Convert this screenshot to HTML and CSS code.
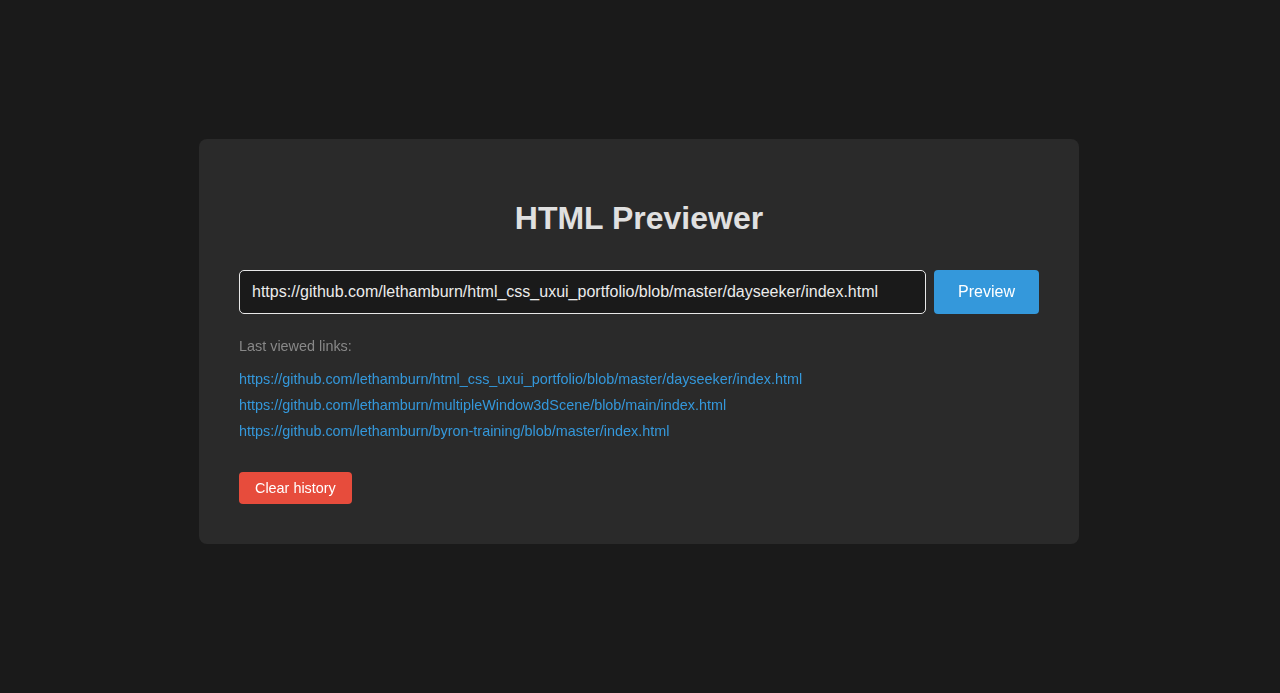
FILE: index.html
```html
<!DOCTYPE html>
<html lang="en">
<head>
<meta charset="utf-8">
<title>HTML Previewer</title>
<link rel="stylesheet" href="styles.css">
</head>
<body>
<main class="card">
  <h1 class="title">HTML Previewer</h1>
  <div class="form">
    <input id="url" class="url-input" type="text" autofocus value="https://github.com/lethamburn/html_css_uxui_portfolio/blob/master/dayseeker/index.html">
    <button class="btn btn-preview" type="button">Preview</button>
  </div>
  <p class="history-label">Last viewed links:</p>
  <ul class="history">
    <li><a href="#">https://github.com/lethamburn/html_css_uxui_portfolio/blob/master/dayseeker/index.html</a></li>
    <li><a href="#">https://github.com/lethamburn/multipleWindow3dScene/blob/main/index.html</a></li>
    <li><a href="#">https://github.com/lethamburn/byron-training/blob/master/index.html</a></li>
  </ul>
  <div class="actions">
    <button class="btn btn-clear" type="button">Clear history</button>
  </div>
</main>
<script>
  var i = document.getElementById('url');
  i.focus();
  i.setSelectionRange(i.value.length, i.value.length);
</script>
</body>
</html>
```
FILE: styles.css
```css
html, body {
  margin: 0;
  padding: 0;
}
body {
  box-sizing: border-box;
  background: #1a1a1a;
  font-family: "Liberation Sans", Arial, sans-serif;
  color: #e0e0e0;
  height: 693px;
  padding-right: 2px;
  display: flex;
  justify-content: center;
  align-items: flex-start;
}
.card {
  box-sizing: border-box;
  width: 880px;
  margin-top: 139px;
  background: #2a2a2a;
  border-radius: 8px;
  padding: 40px;
  display: flex;
  flex-direction: column;
}
.title {
  margin: 21px 0 33px;
  font-size: 32px;
  line-height: 37px;
  font-weight: bold;
  text-align: center;
  color: #e0e0e0;
}
.form {
  display: flex;
  gap: 8px;
  height: 44px;
}
.url-input {
  flex: 1;
  box-sizing: border-box;
  height: 44px;
  padding: 0 12px;
  background: #1a1a1a;
  border: 1px solid #e8e8e8;
  border-radius: 5px;
  color: #ececec;
  font-family: "Liberation Sans", Arial, sans-serif;
  font-size: 16px;
  outline: none;
  caret-color: #ffffff;
}
.btn {
  border: none;
  color: #ffffff;
  font-family: "Liberation Sans", Arial, sans-serif;
  border-radius: 4px;
  cursor: pointer;
}
.btn-preview {
  width: 105px;
  height: 44px;
  background: #3498db;
  font-size: 16px;
}
.history-label {
  margin: 24px 0 0;
  font-size: 14.4px;
  line-height: 16px;
  color: #888888;
}
.history {
  list-style: none;
  margin: 17px 0 0;
  padding: 0;
  display: flex;
  flex-direction: column;
  gap: 10px;
}
.history a {
  font-size: 14.4px;
  line-height: 16px;
  color: #3498db;
  text-decoration: none;
}
.history li {
  line-height: 16px;
  height: 16px;
}
.actions {
  margin-top: 33px;
  display: flex;
}
.btn-clear {
  height: 32px;
  padding: 0 16px;
  background: #e74c3c;
  font-size: 14.4px;
}
```
